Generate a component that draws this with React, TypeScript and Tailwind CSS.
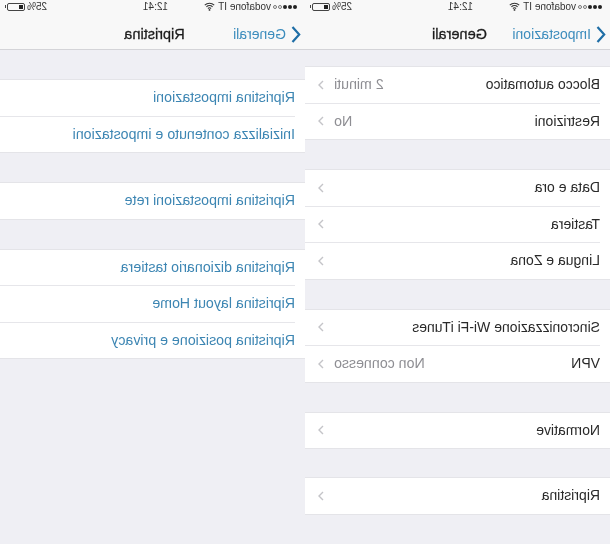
type Row = { label: string; value?: string }

const generali: Row[][] = [
    [{ label: 'Blocco automatico', value: '2 minuti' }, { label: 'Restrizioni', value: 'No' }],
    [{ label: 'Data e ora' }, { label: 'Tastiera' }, { label: 'Lingua e Zona' }],
    [{ label: 'Sincronizzazione Wi-Fi iTunes' }, { label: 'VPN', value: 'Non connesso' }],
    [{ label: 'Normative' }],
    [{ label: 'Ripristina' }],
]

const ripristina: string[][] = [
    ['Ripristina impostazioni', 'Inizializza contenuto e impostazioni'],
    ['Ripristina impostazioni rete'],
    ['Ripristina dizionario tastiera', 'Ripristina layout Home', 'Ripristina posizione e privacy'],
]

function StatusBar() {
    return (
        <div className="h-5 flex items-center pb-[7px] pl-2 pr-[5px] text-[10px] text-[#333] relative">
            <div className="flex gap-[1px] mr-[2px]">
                <span className="w-[4px] h-[4px] rounded-full bg-[#222]" />
                <span className="w-[4px] h-[4px] rounded-full bg-[#222]" />
                <span className="w-[4px] h-[4px] rounded-full bg-[#222]" />
                <span className="w-[4px] h-[4px] rounded-full border border-[#777] box-border" />
                <span className="w-[4px] h-[4px] rounded-full border border-[#777] box-border" />
            </div>
            <span>vodafone IT</span>
            <svg width="11" height="9" viewBox="0 0 11 9" className="ml-[3px]">
                <path d="M0.8 3.2a6.8 6.8 0 0 1 9.4 0M2.4 4.9a4.5 4.5 0 0 1 6.2 0M3.9 6.5a2.3 2.3 0 0 1 3.2 0" fill="none" stroke="#333" strokeWidth="1.1" />
                <circle cx="5.5" cy="7.9" r="0.9" fill="#333" />
            </svg>
            <span className="absolute left-[137px] font-medium">12:41</span>
            <div className="ml-auto flex items-center gap-[2px]">
                <span>25%</span>
                <div className="w-[18px] h-[8px] border border-[#444] rounded-[2px] p-[1px]">
                    <div className="w-[4px] h-full bg-[#222]" />
                </div>
                <div className="w-[1px] h-[3px] bg-[#444] -ml-[1px]" />
            </div>
        </div>
    )
}

function NavBar({ back, title }: { back: string; title: string }) {
    return (
        <div className="bg-[#f8f8f8]">
            <StatusBar />
            <div className="h-[30px] grid grid-cols-[1fr_auto_1fr] items-center border-b border-[#d4d4d8] pr-[4px]">
                <div className="flex items-center gap-[5px] ml-[4px] text-[#3d8dbd] text-[14px]">
                    <svg width="10" height="17" viewBox="0 0 10 17">
                        <polyline points="8.5,1 1.8,8.5 8.5,16" fill="none" stroke="#1f6ea6" strokeWidth="2.2" />
                    </svg>
                    <span>{back}</span>
                </div>
                <span className="text-[14.5px] text-[#1c1c1c] [-webkit-text-stroke:0.3px_#1c1c1c]">{title}</span>
                <div />
            </div>
        </div>
    )
}

function Chevron() {
    return (
        <svg width="6" height="10" viewBox="0 0 6 10" className="shrink-0">
            <polyline points="1,1 5,5 1,9" fill="none" stroke="#c4c4c8" strokeWidth="1.4" />
        </svg>
    )
}

function Group({ children, top }: { children: React.ReactNode; top: string }) {
    return <div className={`bg-white border-y border-[#e4e4e8] ${top}`}>{children}</div>
}

function Line({ show }: { show: boolean }) {
    return show ? <div className="h-[1px] ml-[10px] bg-[#e6e6ea]" /> : null
}

export default function App() {
    return (
        <main className="w-[610px] h-[544px] overflow-hidden -scale-x-100 flex bg-[#efeff4] font-['Liberation_Sans',sans-serif] blur-[0.3px]">
            <section className="w-[305px]">
                <NavBar back="Impostazioni" title="Generali" />
                {generali.map((group, g) => (
                    <Group key={g} top={g === 0 ? 'mt-[16px]' : g === 4 ? 'mt-[28px]' : 'mt-[29px]'}>
                        {group.map((row, i) => (
                            <div key={row.label}>
                                <Line show={i > 0} />
                                <div className="h-[35.5px] flex items-center pl-[10px] pr-[13px] text-[14px] text-[#2a2a2a]">
                                    <span>{row.label}</span>
                                    {row.value && <span className="ml-auto text-[14.2px] text-[#8e8e93]">{row.value}</span>}
                                    <span className={row.value ? 'ml-[10px] flex' : 'ml-auto flex'}>
                                        <Chevron />
                                    </span>
                                </div>
                            </div>
                        ))}
                    </Group>
                ))}
            </section>
            <section className="w-[305px]">
                <NavBar back="Generali" title="Ripristina" />
                {ripristina.map((group, g) => (
                    <Group key={g} top="mt-[29px]">
                        {group.map((label, i) => (
                            <div key={label}>
                                <Line show={i > 0} />
                                <div className="h-[35.5px] flex items-center pl-[10px] text-[14.2px] text-[#3d86b3]">
                                    {label}
                                </div>
                            </div>
                        ))}
                    </Group>
                ))}
            </section>
        </main>
    )
}
